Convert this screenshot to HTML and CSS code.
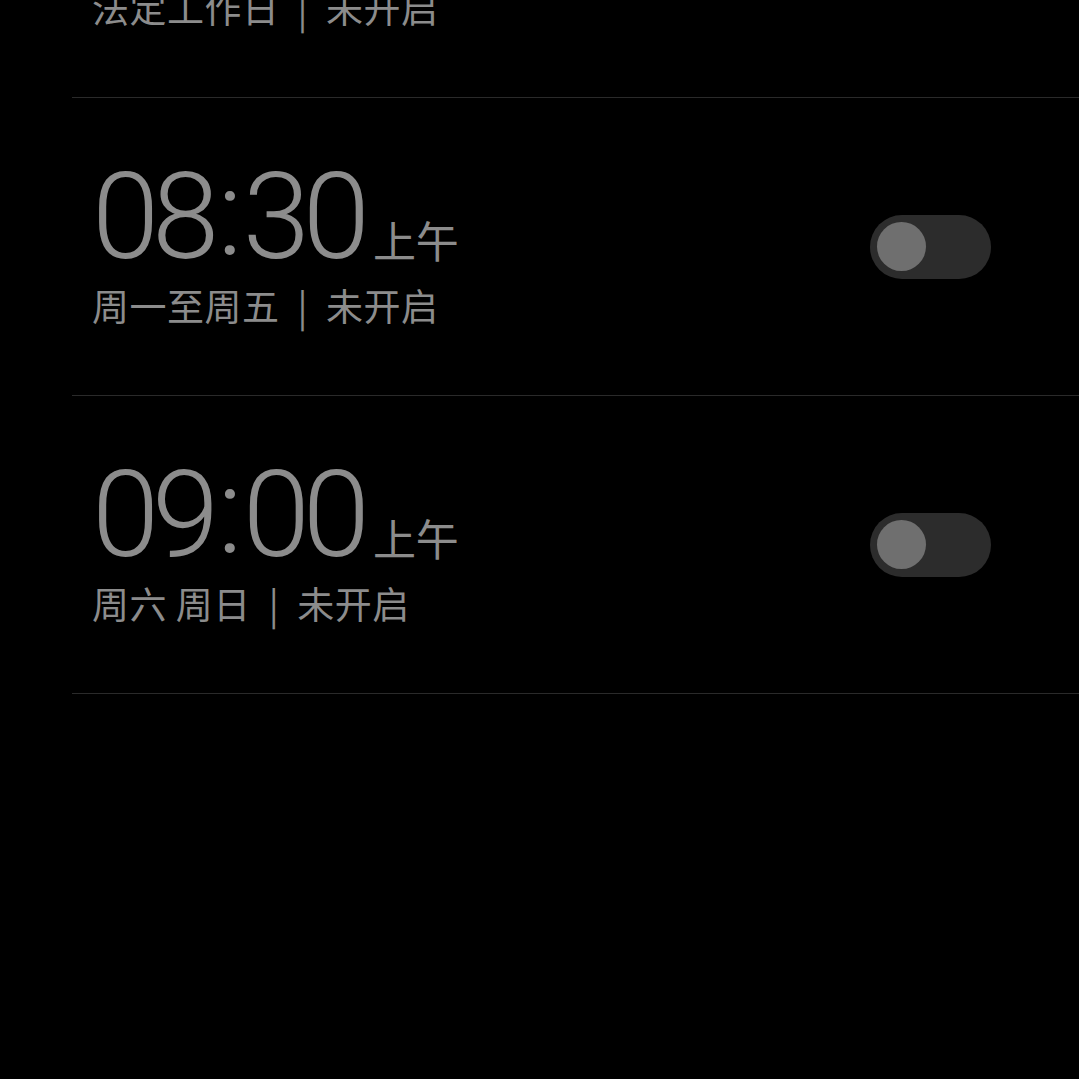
FILE: index.html
```html
<!DOCTYPE html>
<html lang="zh-CN">
<head>
<meta charset="utf-8">
<link rel="stylesheet" href="styles.css">
</head>
<body>
<div class="list">
  <div class="alarm">
    <div class="info">
      <div class="time"><span class="hm">07<span class="colon">:</span>30</span><span class="ampm">上午</span></div>
      <div class="sub">法定工作日<span class="sep">|</span>未开启</div>
    </div>
    <div class="toggle"><div class="thumb"></div></div>
  </div>
  <div class="alarm">
    <div class="info">
      <div class="time"><span class="hm">08<span class="colon">:</span>30</span><span class="ampm">上午</span></div>
      <div class="sub">周一至周五<span class="sep">|</span>未开启</div>
    </div>
    <div class="toggle"><div class="thumb"></div></div>
  </div>
  <div class="alarm">
    <div class="info">
      <div class="time"><span class="hm">09<span class="colon">:</span>00</span><span class="ampm">上午</span></div>
      <div class="sub">周六 周日<span class="sep">|</span>未开启</div>
    </div>
    <div class="toggle"><div class="thumb"></div></div>
  </div>
</div>
</body>
</html>
```
FILE: styles.css
```css
html, body {
  margin: 0;
  background: #000;
}
body {
  width: 1079px;
  height: 1079px;
  overflow: hidden;
  font-family: "Noto Sans CJK SC", "Noto Sans", sans-serif;
  color: #8c8c8c;
}
.list {
  margin-left: 72px;
  margin-top: -200px;
}
.alarm {
  height: 297px;
  border-bottom: 1px solid #2a2a2a;
  display: flex;
  align-items: center;
  justify-content: space-between;
  padding: 0 88px 0 20px;
}
.info {
  display: flex;
  flex-direction: column;
}
.time {
  display: flex;
  align-items: baseline;
  height: 104px;
}
.hm {
  font-family: Roboto, "Noto Sans", sans-serif;
  font-weight: 300;
  font-size: 121px;
  line-height: 104px;
  letter-spacing: -7px;
}
.colon {
  display: inline-block;
  padding: 0 7px 0 5px;
  transform: translateY(-4px);
}
.ampm {
  font-size: 43px;
  margin-left: 10px;
}
.sub {
  font-size: 37px;
  line-height: 48px;
  margin-top: 12px;
  letter-spacing: 0.5px;
}
.sep {
  margin: 0 18px;
}
.toggle {
  width: 121px;
  height: 64px;
  border-radius: 32px;
  background: #2c2c2c;
  display: flex;
  align-items: center;
  padding: 0 7px;
  box-sizing: border-box;
}
.thumb {
  width: 49px;
  height: 49px;
  border-radius: 50%;
  background: #6f6f6f;
}
```
